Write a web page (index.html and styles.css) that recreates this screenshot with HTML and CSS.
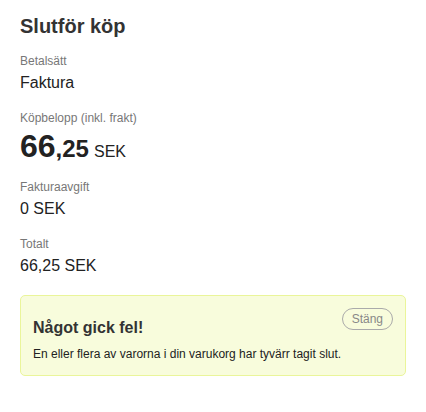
FILE: index.html
```html
<!DOCTYPE html>
<html lang="sv">
<head>
<meta charset="utf-8">
<link rel="stylesheet" href="styles.css">
</head>
<body>
<main class="page">
  <h1 class="title">Slutför köp</h1>
  <div class="field">
    <div class="label">Betalsätt</div>
    <div class="value">Faktura</div>
  </div>
  <div class="field">
    <div class="label">Köpbelopp (inkl. frakt)</div>
    <div class="amount"><span class="int">66</span><span class="dec">,25</span><span class="cur">SEK</span></div>
  </div>
  <div class="field">
    <div class="label">Fakturaavgift</div>
    <div class="value">0 SEK</div>
  </div>
  <div class="field">
    <div class="label">Totalt</div>
    <div class="value">66,25 SEK</div>
  </div>
  <div class="alert">
    <div class="alert-head">
      <h2 class="alert-title">Något gick fel!</h2>
      <button class="close">Stäng</button>
    </div>
    <p class="alert-text">En eller flera av varorna i din varukorg har tyvärr tagit slut.</p>
  </div>
</main>
</body>
</html>
```
FILE: styles.css
```css
html, body {
  margin: 0;
  background: #fff;
}
body {
  font-family: "Liberation Sans", Arial, sans-serif;
  color: #222;
}
.page {
  padding: 14px 20px 20px;
  display: flex;
  flex-direction: column;
}
.title {
  margin: 0;
  font-size: 20px;
  line-height: 24px;
  font-weight: bold;
  color: #333;
}
.field {
  display: flex;
  flex-direction: column;
  gap: 5px;
  margin-top: 16px;
}
.field + .field {
  margin-top: 18px;
}
.label {
  font-size: 12px;
  line-height: 14px;
  color: #777;
}
.value {
  font-size: 16px;
  line-height: 20px;
  color: #222;
}
.amount {
  display: flex;
  align-items: baseline;
  line-height: 1;
  color: #222;
}
.int {
  font-size: 32px;
  font-weight: bold;
}
.dec {
  font-size: 24px;
  font-weight: bold;
}
.cur {
  font-size: 16px;
  margin-left: 5px;
}
.alert {
  margin-top: 19px;
  background: #f8fcdc;
  border: 1px solid #eaf59a;
  border-radius: 5px;
  padding: 12px 12px 12px;
}
.alert-head {
  display: flex;
  justify-content: space-between;
  align-items: flex-start;
}
.alert-title {
  margin: 10px 0 0;
  font-size: 16px;
  line-height: 20px;
  font-weight: bold;
  color: #333;
}
.close {
  font-family: "Liberation Sans", Arial, sans-serif;
  font-size: 12px;
  line-height: 14px;
  color: #888;
  background: transparent;
  border: 1px solid #aaa;
  border-radius: 12px;
  padding: 3px 9px;
}
.alert-text {
  margin: 7px 0 0;
  font-size: 12px;
  line-height: 18px;
  color: #222;
}
```
